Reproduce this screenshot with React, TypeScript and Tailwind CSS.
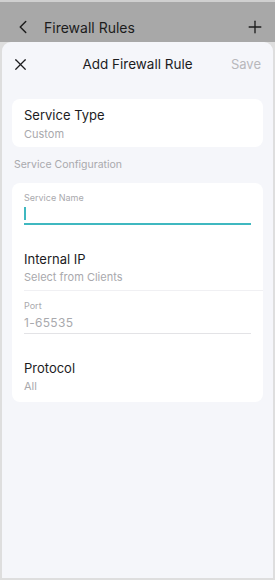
import { ChevronLeft, Plus, X } from "lucide-react";

const font = { fontFamily: "Inter, 'Noto Sans', sans-serif" };

function Field({ title, value, bottom }: { title: string; value: string; bottom: string }) {
  return (
    <div className={`flex flex-col pt-[20px] ${bottom}`}>
      <span className="text-[13px] leading-[18px] text-[#1c1c1e]">{title}</span>
      <span className="mt-[1px] text-[11px] leading-[16px] text-[#a9a9ad]">{value}</span>
    </div>
  );
}

export default function App() {
  return (
    <div className="w-[275px] h-[580px] bg-[#dedede] flex flex-col overflow-hidden" style={font}>
      <div className="h-[42px] shrink-0 bg-[#a8a8a8] border-t-2 border-[#d0d0d0] flex items-center pt-[10px] pl-[12px] pr-[10px]">
        <ChevronLeft size={22} strokeWidth={1.6} className="text-[#1c1c1c]" />
        <span className="ml-[10px] text-[14px] text-[#1c1c1c]">Firewall Rules</span>
        <Plus size={20} strokeWidth={1.6} className="ml-auto text-[#1c1c1c]" />
      </div>
      <div className="flex-1 mx-[2px] mb-[2px] bg-[#f5f6fa] rounded-t-[9px] flex flex-col px-[10px]">
        <div className="h-[45px] flex items-center relative">
          <X size={19} strokeWidth={1.5} className="-ml-[1px] text-[#1c1c1e]" />
          <span className="absolute left-1/2 -translate-x-1/2 text-[13.5px] text-[#1c1c1e]">Add Firewall Rule</span>
          <span className="ml-auto mr-[2px] text-[13px] text-[#b8b8bc]">Save</span>
        </div>
        <div className="mt-[12px] bg-white rounded-[8px] px-[12px] pt-[7px] pb-[5px] flex flex-col">
          <span className="text-[13px] leading-[18px] text-[#1c1c1e]">Service Type</span>
          <span className="mt-[2px] text-[11px] leading-[16px] text-[#a9a9ad]">Custom</span>
        </div>
        <div className="mt-[11px] px-[2px] text-[10.5px] leading-[14px] text-[#a9a9ad]">Service Configuration</div>
        <div className="mt-[11px] bg-white rounded-[8px] pl-[12px] flex flex-col pb-[1px]">
          <div className="pr-[12px] pt-[9px]">
            <div className="text-[9px] leading-[12px] text-[#a9a9ad]">Service Name</div>
            <div className="h-[21px] border-b-2 border-[#3fb8c0] flex items-center">
              <div className="w-[2px] h-[13px] bg-[#3fb8c0]" />
            </div>
          </div>
          <div className="mt-[5px] border-b border-[#f0f0f3]">
            <Field title="Internal IP" value="Select from Clients" bottom="pb-[5px]" />
          </div>
          <div className="pr-[12px] pt-[9px]">
            <div className="text-[9px] leading-[12px] text-[#a9a9ad]">Port</div>
            <div className="h-[22px] pt-[1px] border-b border-[#e3e3e6] flex items-center text-[12px] text-[#a9a9ad] tracking-[0.3px]">1-65535</div>
          </div>
          <div className="mt-[5px]">
            <Field title="Protocol" value="All" bottom="pb-[7px]" />
          </div>
        </div>
      </div>
    </div>
  );
}
